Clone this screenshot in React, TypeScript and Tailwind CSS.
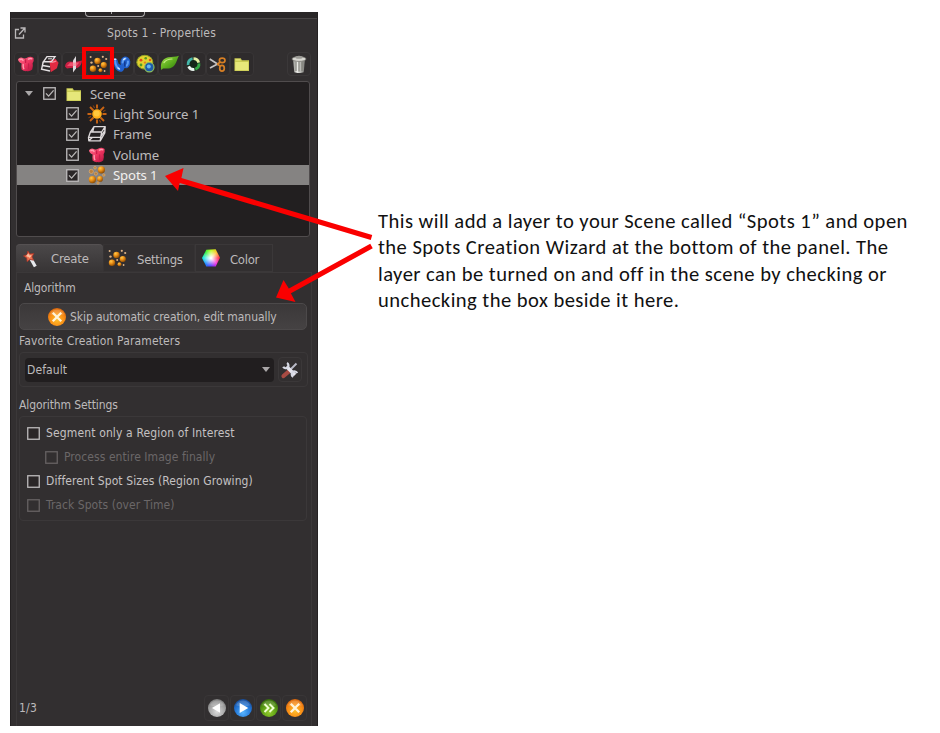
import type { ReactNode } from 'react';

const UI = "font-['DejaVu_Sans_Condensed','DejaVu_Sans',sans-serif] [font-stretch:condensed]";

function Defs() {
  return (
    <svg className="absolute h-0 w-0" aria-hidden="true">
      <defs>
        <radialGradient id="orange" cx="35%" cy="28%" r="75%">
          <stop offset="0" stopColor="#ffc94a" />
          <stop offset=".45" stopColor="#ec9118" />
          <stop offset="1" stopColor="#8a4a04" />
        </radialGradient>
        <radialGradient id="cancel" cx="50%" cy="65%" r="65%">
          <stop offset="0" stopColor="#ffc02a" />
          <stop offset=".6" stopColor="#f98e16" />
          <stop offset="1" stopColor="#d9650c" />
        </radialGradient>
        <radialGradient id="gray" cx="50%" cy="70%" r="65%">
          <stop offset="0" stopColor="#dcdcdc" />
          <stop offset=".6" stopColor="#a9a9a9" />
          <stop offset="1" stopColor="#828282" />
        </radialGradient>
        <radialGradient id="blue" cx="50%" cy="75%" r="70%">
          <stop offset="0" stopColor="#58b4ff" />
          <stop offset=".6" stopColor="#2478d8" />
          <stop offset="1" stopColor="#184f9e" />
        </radialGradient>
        <radialGradient id="green" cx="50%" cy="75%" r="70%">
          <stop offset="0" stopColor="#93cc2c" />
          <stop offset=".6" stopColor="#5a9c14" />
          <stop offset="1" stopColor="#376d0b" />
        </radialGradient>
        <linearGradient id="pink" x1="0" y1="0" x2="1" y2="1">
          <stop offset="0" stopColor="#ff6f8c" />
          <stop offset=".5" stopColor="#ee3560" />
          <stop offset="1" stopColor="#b3123f" />
        </linearGradient>
        <linearGradient id="leaf" x1="0" y1="0" x2="1" y2="1">
          <stop offset="0" stopColor="#a3dc4c" />
          <stop offset=".5" stopColor="#5fb01f" />
          <stop offset="1" stopColor="#2b7409" />
        </linearGradient>
        <linearGradient id="metal">
          <stop offset="0" stopColor="#8c8c88" />
          <stop offset=".35" stopColor="#efefeb" />
          <stop offset="1" stopColor="#73736f" />
        </linearGradient>
      </defs>
    </svg>
  );
}

function Svg({ s = 20, children }: { s?: number; children: ReactNode }) {
  return (
    <svg width={s} height={s} viewBox="0 0 20 20" className="shrink-0">
      {children}
    </svg>
  );
}

const Volume = () => (
  <Svg>
    <path d="M2 5.200Q4 2.600 7.400 4.200q1.800 1 3.600-.4 3.400-2 6.600.2.600 3.200-1 5.200.800 3.200-.4 6.400-2.400 2.200-5.600 1.500-2.800.3-5-1.600-.6-3.200 0-6Q2 7.800 2 5.200z" fill="url(#pink)" />
    <path d="M4 5.600q1.800-.8 3 .8M12.400 5.200q1.600-1 3.400-.4M7.200 10.500q-.2 2.400.6 4.200" stroke="#ff9db0" strokeWidth="1.400" fill="none" strokeLinecap="round" />
    <path d="M9.600 6v2.400M12.600 10v4.600" stroke="#c81d4a" strokeWidth="1.300" strokeLinecap="round" />
  </Svg>
);

const Surface = () => (
  <Svg>
    <path d="M9.500 6.500 15.500 5l3 3.700-1.600 5.600-6.200 3.900z" fill="#e42a42" />
    <path d="M7 2.600h8l-3.600 5.200H3.400zM3.200 8l-1.600 7.200 8.400 1.800M2.600 11.500l7.400 1.200" stroke="#e6e2e4" strokeWidth="1.400" fill="none" />
    <path d="M8 4.800h4" stroke="#e6e2e4" strokeWidth="1" />
    <path d="m12 8.300 4.200-1.200" stroke="#f88a97" strokeWidth="1.200" />
  </Svg>
);

const Slicer = () => (
  <Svg>
    <path d="M1 12.500q.5-4.500 4.500-5 6 1 12.500-1-.5 6-5 7.500-5-.5-10 .5z" fill="#cb2044" />
    <path d="m3 12 3.200-3.500h9L12.500 12z" fill="#f0506e" />
    <path d="m9 6.500 3-4.500v12.500l-3 4z" fill="#dedade" />
    <path d="M9 8.500h3V12H9z" fill="#f39aaa" />
  </Svg>
);

const Spots = () => (
  <Svg>
    <g fill="url(#orange)">
      <circle cx="9.5" cy="7" r="3.200" />
      <circle cx="15.800" cy="11" r="3.100" />
      <circle cx="5" cy="14.800" r="3.200" />
      <circle cx="12.500" cy="16.300" r="2" />
    </g>
    <g fill="#dfb486">
      <circle cx="2.600" cy="3" r="1" />
      <circle cx="14.800" cy="2.800" r="1.100" />
      <circle cx="3.500" cy="8.600" r="1.200" />
      <circle cx="18.200" cy="5" r="1.100" />
      <circle cx="10.200" cy="12" r="1" />
      <circle cx="16.600" cy="17" r=".9" />
    </g>
  </Svg>
);

const SceneSpots = () => (
  <Svg>
    <g fill="url(#orange)">
      <circle cx="14.400" cy="4.800" r="3.600" />
      <circle cx="5.400" cy="14.600" r="3.600" />
      <circle cx="13" cy="13.900" r="2.900" />
    </g>
    <g fill="#b9803d" stroke="#e3b276" strokeWidth=".6">
      <circle cx="4.300" cy="6.400" r="2.100" />
      <circle cx="8.900" cy="8.600" r="1.600" />
      <circle cx="8" cy="2.800" r="1.300" />
      <circle cx="16.800" cy="10" r="1.200" />
      <circle cx="11" cy="18" r="1.200" />
    </g>
  </Svg>
);

const Filaments = () => (
  <Svg>
    <path d="M1 5.500q2.200-2.300 4.400.2l1.200 4 2.200 1.200L8.400 8q.4-4 4.300-5.400 4.600.2 5.600 4.800.2 4.800-3.400 6.900l-2.400-.4q-1.400 4.400-4.600 3.900Q2.600 16.300 2 10z" fill="#2160cc" />
    <path d="M3.200 7q.2 5 3.600 7.600M10.600 8.500q.2-3.200 3-4M16 7.500q.2 2.800-1.400 4.200" fill="none" stroke="#5b9bf2" strokeWidth="2" strokeLinecap="round" />
    <path d="m2.500 5.300 1.300-.1M11.600 5.600l1.400-1.100M6 14l1.500 1" stroke="#cfe6ff" strokeWidth="1.400" strokeLinecap="round" />
    <path d="M12.800 8v4" stroke="#123a90" strokeWidth="1.500" strokeLinecap="round" />
  </Svg>
);

const Cells = () => (
  <Svg>
    <ellipse cx="8.800" cy="8.200" rx="8" ry="6.900" fill="#e3d22f" stroke="#91a226" />
    <circle cx="5" cy="6.200" r="1.400" fill="#e04c1e" />
    <circle cx="9.700" cy="4.300" r="1.300" fill="#569821" />
    <circle cx="14" cy="6" r="1.200" fill="#dc5520" />
    <circle cx="5" cy="11" r="1.400" fill="#4c9a2a" />
    <circle cx="9" cy="8.600" r="1.200" fill="#e68221" />
    <circle cx="13.300" cy="13.200" r="4.700" fill="#1c5caa" stroke="#8bbd61" strokeWidth="1.200" />
    <circle cx="12.800" cy="12.600" r="2" fill="#65b8ef" />
  </Svg>
);

const Leaf = () => (
  <Svg>
    <path d="M1.300 16C-.2 9.700 2.500 4.200 8.300 3.200 12 2.400 15.500 3.300 19 1.700c-2.500 3.500-2.300 10.500-8.800 12.500-3.500.8-5.500-.1-7.200.4z" fill="url(#leaf)" />
    <path d="M4 8.500q3-3.500 8-3.500" stroke="#c5ee83" strokeWidth="1.200" fill="none" strokeLinecap="round" />
  </Svg>
);

const Ring = () => (
  <Svg>
    <circle cx="9.500" cy="10" r="6.600" fill="#152719" />
    <g fill="none" strokeWidth="2.800">
      <path d="M9.500 4.600a5.400 5.400 0 0 1 5.200 4" stroke="#e6f2a6" />
      <path d="M14.900 9.400a5.400 5.400 0 0 1-3.600 5.700" stroke="#35a845" />
      <path d="M10.400 15.400a5.400 5.400 0 0 1-5.800-3" stroke="#e9f5ef" />
      <path d="M4.100 11a5.400 5.400 0 0 1 4.500-6.300" stroke="#43b6aa" />
    </g>
  </Svg>
);

const Scissors = () => (
  <Svg>
    <path d="m1.700 5 9 5.800M2 14l9-4.800" stroke="#c6c4c4" strokeWidth="1.700" />
    <g fill="none" stroke="#d77f24" strokeWidth="1.700">
      <ellipse cx="14.200" cy="6.400" rx="2.800" ry="2.200" />
      <ellipse cx="14" cy="14.300" rx="2.300" ry="2.900" />
      <path d="m9 10.500 3.200-2.400M9.200 9.800l3 2.400" />
    </g>
  </Svg>
);

const Folder = () => (
  <Svg>
    <path d="M2.500 4.200h6.200l1.200 2H17V17H2.500z" fill="#c9ca52" />
    <path d="M3.500 5.200H8l.8 1.300H3.500zM3.300 8h13v8.200h-13z" fill="#e6e77a" />
  </Svg>
);

const Trash = () => (
  <Svg>
    <path d="M4 6h12l-1.300 12.300c-2 1-7.400 1-9.400 0z" fill="url(#metal)" />
    <path d="M7 7.500v9.500m3-9.500v10m3-10v9.500" stroke="#77776f" strokeWidth="1" />
    <ellipse cx="10" cy="5" rx="7" ry="2.400" fill="#d9d8d2" stroke="#767570" strokeWidth=".8" />
    <ellipse cx="10" cy="3.200" rx="3.600" ry="1.500" fill="#9c9b96" />
  </Svg>
);

const Sun = () => (
  <Svg>
    <path d="M10 .5v4M10 15.500v4M.5 10h4M15.500 10h4M3 3l3.500 3.500M13.500 13.500 17 17M3 17l3.500-3.500M13.500 6.500 17 3" stroke="#c96414" strokeWidth="1.900" />
    <path d="M6.300 1.500 7.500 4M12.500 16l1.200 2.500M1.500 13.700 4 12.500M16 7.500l2.500-1.200" stroke="#96460d" strokeWidth="1" />
    <circle cx="10" cy="10" r="4.800" fill="#ffb01a" />
    <circle cx="9.700" cy="9.600" r="3" fill="#ffca3e" />
  </Svg>
);

const Frame = () => (
  <Svg>
    <path d="M7 2.600h11.200L14.600 8H3.400zM3.400 8 1.500 13.500l.3 3.300h11.400L14.600 8M18.200 2.600 17.800 9l-4.600 7.800M1.500 13.300h11.800l4.400-6.500M7 2.600 5.600 8M5.500 13.300l-3.700 3.500" stroke="#ddd9da" strokeWidth="1.350" fill="none" strokeLinejoin="round" />
  </Svg>
);

const Wand = () => (
  <Svg>
    <path d="m8.500 9 4.800 8.500" stroke="#e7e9ed" strokeWidth="3.200" />
    <path d="m5.800 2 2.200 3 3.800-.6-1.800 3.500 1.500 3.300-3.600-.8-2.800 2.300-.4-3.800-3.200-2 3.600-1.200z" fill="#ee7150" stroke="#a33427" strokeWidth=".8" />
    <path d="m6.200 4.800 1 2 2-.2-1.300 1.900-1.300-.8-2-.7z" fill="#ffc5a4" stroke="#ffc5a4" strokeWidth=".6" />
  </Svg>
);

const ColorCube = () => (
  <div className="h-[18px] w-[18px] shrink-0 bg-[radial-gradient(circle,#fff_5%,#ffffff00_65%),conic-gradient(from_0deg,#b7ff1a,#ffbf28,#ff2c48,#f52cdc,#5939ff,#1689ff,#10e6e3,#26ef3d,#b7ff1a)] [clip-path:polygon(24%_4%,76%_2%,100%_48%,76%_97%,24%_97%,0_50%)]" />
);

const Tools = () => (
  <Svg>
    <path d="m3.500 16 6-5.200" stroke="#a84b43" strokeWidth="4.200" strokeLinecap="round" />
    <path d="m9.500 10.500 7-7" stroke="#b9bac7" strokeWidth="2" />
    <path d="m6.500 6.500 8.500 8.500" stroke="#e5e5ee" strokeWidth="3.600" />
    <path d="M7 3a2.800 2.800 0 1 1-3.800 3.800M13.300 16.800a2.800 2.800 0 1 1 3.800-3.600" stroke="#d7d9e4" strokeWidth="2.200" fill="none" />
  </Svg>
);

function RoundIcon({ kind }: { kind: 'back' | 'play' | 'fast' | 'cancel' }) {
  const fill = { back: 'url(#gray)', play: 'url(#blue)', fast: 'url(#green)', cancel: 'url(#cancel)' }[kind];
  return (
    <Svg>
      <circle cx="10" cy="10" r="9" fill={fill} />
      <path d="M3 7.200a7.600 7.600 0 0 1 14 0Q10 10 3 7.200z" fill="#fff" opacity=".17" />
      {kind === 'back' && <path d="M13 5.200v9.600L5 10z" fill="#fff" />}
      {kind === 'play' && <path d="M6.700 5v10l8.500-5z" fill="#fff" />}
      {kind === 'fast' && <path d="m5.500 6 4 4-4 4m5-8 4 4-4 4" fill="none" stroke="#efffd0" strokeWidth="2" />}
      {kind === 'cancel' && <path d="m5.800 5.700 8.400 8.600m0-8.600-8.400 8.600" stroke="#fff4db" strokeWidth="2.300" />}
    </Svg>
  );
}

function Check({ on = false, dim = false }: { on?: boolean; dim?: boolean }) {
  return (
    <svg width="13" height="13" viewBox="0 0 13 13" className={dim ? 'shrink-0 text-[#666263]' : 'shrink-0 text-[#bdbbbc]'}>
      <rect x=".75" y=".75" width="11.500" height="11.500" fill={dim ? 'none' : '#2a2627'} stroke="currentColor" strokeWidth="1.300" />
      {on && <path d="m3 6.400 2.600 2.700 5-5.800" fill="none" stroke="#bab8b8" strokeWidth="1.300" />}
    </svg>
  );
}

function TreeRow({ icon, label, selected = false }: { icon: ReactNode; label: string; selected?: boolean }) {
  return (
    <div className={`flex h-[20.4px] items-center pl-[49px] ${selected ? 'bg-[#858382] text-[#f2f0ef]' : ''}`}>
      <Check on />
      <span className="ml-[8px] mr-[6px] flex">{icon}</span>
      <span>{label}</span>
    </div>
  );
}

function Option({ label, dim = false, indent = false, spacing = '' }: { label: string; dim?: boolean; indent?: boolean; spacing?: string }) {
  return (
    <div className={`flex h-[24.1px] items-center gap-[6px] ${indent ? 'pl-[25px]' : 'pl-[7px]'} ${dim ? 'text-[#6b6768]' : 'text-[#c4c1c2]'}`}>
      <Check dim={dim} />
      <span className={spacing}>{label}</span>
    </div>
  );
}

const toolbar = [Volume, Surface, Slicer, Spots, Filaments, Cells, Leaf, Ring, Scissors, Folder];

export default function App() {
  return (
    <main className="relative flex h-[733px] w-[940px] items-start overflow-hidden bg-white pl-[10px] pt-3">
      <Defs />
      <section className={`${UI} flex h-[714px] w-[308px] shrink-0 flex-col overflow-hidden whitespace-nowrap border-x border-[#242122] bg-[#322f30] text-[12px] leading-[16px] text-[#bdbabb]`}>
        <div className="h-[7px] shrink-0 border-b border-[#484546] bg-[#292627]">
          <div className="ml-[74px] flex h-[5px] w-[60px] justify-center rounded-b border border-t-0 border-[#aaa7a8]">
            <span className="-ml-[8px] h-[2px] w-px bg-[#aaa7a8]" />
          </div>
        </div>

        <header className="flex h-[28px] shrink-0 items-center pl-[3px]">
          <svg width="12" height="12" viewBox="0 0 12 12" fill="none" stroke="#bbb8b9" strokeWidth="1.3">
            <path d="M5 2.500H1.500V11h8V7.500M5 7.500l5.500-6M6.500 1H11v4.500" />
          </svg>
          <h1 className="ml-[81px] font-normal tracking-[0.16px]">Spots 1 - Properties</h1>
        </header>

        <div className="flex h-[34px] shrink-0 items-center pl-[3px]">
          {toolbar.map((Icon, i) => (
            <span key={i} className="flex h-6 w-6 shrink-0 items-center justify-center rounded-sm border border-[#383536] bg-[#2e2b2c]">
              <Icon />
            </span>
          ))}
          <span className="ml-[33px] flex h-6 w-6 shrink-0 items-center justify-center rounded-sm border border-[#3b3839]"><Trash /></span>
        </div>

        <div className="ml-[5px] h-[156px] w-[294px] shrink-0 rounded-[3px] border border-[#504c4d] bg-[#221f20] pt-[1.4px] font-['Noto_Sans',sans-serif] text-[13.2px] leading-5 tracking-[-0.14px]">
          <div className="flex h-[20.4px] items-center pl-[8px]">
            <svg width="8" height="5" viewBox="0 0 8 5"><path d="M0 0h8L4 5z" fill="#aaa7a8" /></svg>
            <span className="ml-[10px] mr-[8px] flex"><Check on /></span>
            <Folder />
            <span className="ml-[6px]">Scene</span>
          </div>
          <TreeRow icon={<Sun />} label="Light Source 1" />
          <TreeRow icon={<Frame />} label="Frame" />
          <TreeRow icon={<Volume />} label="Volume" />
          <TreeRow icon={<SceneSpots />} label="Spots 1" selected />
        </div>

        <nav className="ml-[5px] mt-[7px] flex h-[28px] w-[294px] shrink-0 items-center text-[13px]">
          <div className="flex h-full w-[87px] items-center rounded-t border-t border-[#555152] bg-gradient-to-b from-[#4b4849] to-[#373435] pl-[6px]">
            <Wand />
            <span className="ml-[9px] tracking-[-0.2px]">Create</span>
          </div>
          <div className="flex h-full w-[92px] items-center border border-[#363334] pl-[3px]">
            <Spots />
            <span className="ml-[10px] pt-[3px] tracking-[-0.3px]">Settings</span>
          </div>
          <div className="flex h-full w-[78px] items-center border border-[#3b3839] pl-[6px]">
            <ColorCube />
            <span className="ml-[10px] pt-[3px] tracking-[-0.3px]">Color</span>
          </div>
        </nav>

        <div className="mx-[5px] flex min-h-0 flex-1 flex-col border border-b-0 border-[#3b3839] pl-[2px]">
          <h2 className="ml-[5px] mt-[7px] font-normal tracking-[-0.15px]">Algorithm</h2>
          <button className="mt-[7px] flex h-[27px] w-[288px] shrink-0 items-center rounded-[5px] border border-[#4c494a] bg-gradient-to-b from-[#3b3839] to-[#454243] pl-[27px]">
            <RoundIcon kind="cancel" />
            <span className="ml-[3px] tracking-[-0.07px]">Skip automatic creation, edit manually</span>
          </button>
          <h2 className="mt-[3px] font-normal tracking-[0.14px]">Favorite Creation Parameters</h2>
          <div className="mt-[3px] flex h-[35px] w-[289px] shrink-0 items-center rounded border border-[#3b3839] pl-[5px]">
            <div className="flex h-6 w-[249px] items-center justify-between rounded-sm bg-[#211e1f] pl-[2px] pr-[4px]">
              <span className="tracking-[0.1px]">Default</span>
              <svg width="8" height="5" viewBox="0 0 8 5"><path d="M0 0h8L4 5z" fill="#aaa7a8" /></svg>
            </div>
            <span className="ml-[4px] flex h-[25px] w-[24px] items-center justify-center rounded-sm border border-[#3b3839]"><Tools /></span>
          </div>
          <h2 className="mt-[10px] font-normal tracking-[-0.1px]">Algorithm Settings</h2>
          <div className="mt-[3px] h-[105px] w-[288px] shrink-0 rounded border border-[#3b3839] pt-[4px]">
            <Option label="Segment only a Region of Interest" spacing="tracking-[0.14px]" />
            <Option label="Process entire Image finally" dim indent spacing="tracking-[0.07px]" />
            <Option label="Different Spot Sizes (Region Growing)" spacing="tracking-[0.09px]" />
            <Option label="Track Spots (over Time)" dim spacing="tracking-[0.05px]" />
          </div>
          <footer className="mb-[5px] mt-auto flex h-[26px] items-center justify-between">
            <span className="tracking-[0.2px]">1/3</span>
            <div className="flex gap-px pr-[4px]">
              {(['back', 'play', 'fast', 'cancel'] as const).map((kind) => (
                <span key={kind} className="flex h-[26px] w-[25px] items-center justify-center rounded border border-[#393637]"><RoundIcon kind={kind} /></span>
              ))}
            </div>
          </footer>
        </div>
      </section>

      <p className="ml-[60px] mt-[196px] whitespace-nowrap font-['Carlito','Lato',sans-serif] text-[20.6px] leading-[26.3px] tracking-[0.45px] text-[#111]">
        <span className="block">This will add a layer to your Scene called “Spots 1” and open</span>
        <span className="block">the Spots Creation Wizard at the bottom of the panel. The</span>
        <span className="block">layer can be turned on and off in the scene by checking or</span>
        <span className="block">unchecking the box beside it here.</span>
      </p>

      <div className="pointer-events-none absolute left-[82px] top-[47px] h-[32px] w-[32px] border-4 border-[#f80000]" />
      <svg className="pointer-events-none absolute left-0 top-0" width="940" height="733" viewBox="0 0 940 733">
        <g stroke="#fa0000" strokeWidth="5.2">
          <path d="M371.5 237.5 179 180M371.5 246 287 292.5" />
        </g>
        <path d="m165 176 18.5-8-2 9.5-1.6 4.5-1.9 9zM276 297.5l7.5-17.5 5 8 2.2 5 4.8 9z" fill="#fa0000" />
      </svg>
    </main>
  );
}
